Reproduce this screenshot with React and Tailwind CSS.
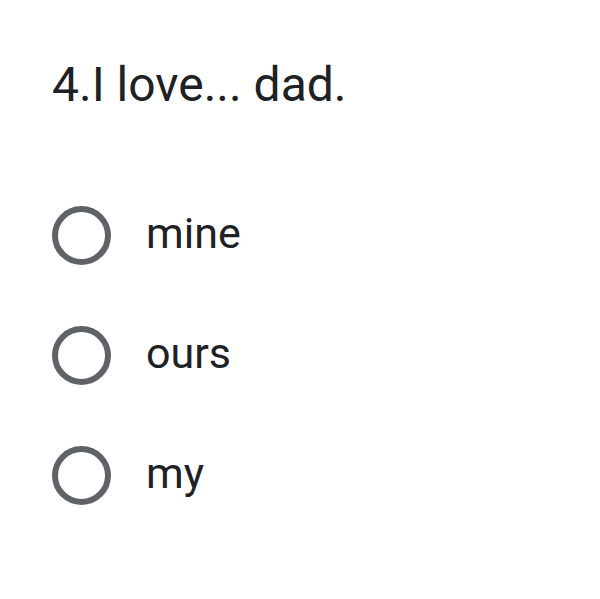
const options = ["mine", "ours", "my"];

const App = () => {
  return (
    <div className="min-h-[599px] w-[600px] bg-white pl-[52px] pt-[57px] text-[#202124] [font-family:Roboto,'Liberation_Sans',sans-serif]">
      <h1 className="text-[48px] font-normal leading-[56px]">
        4.I love... dad.
      </h1>
      <div className="mt-[62px] flex flex-col">
        {options.map((opt) => (
          <label key={opt} className="flex h-[120px] items-center">
            <span className="h-[59px] w-[59px] shrink-0 rounded-full border-[6px] border-[#5f6368]" />
            <span className="mb-[4px] ml-[35px] text-[43px] leading-none">
              {opt}
            </span>
          </label>
        ))}
      </div>
    </div>
  );
};

export default App;
